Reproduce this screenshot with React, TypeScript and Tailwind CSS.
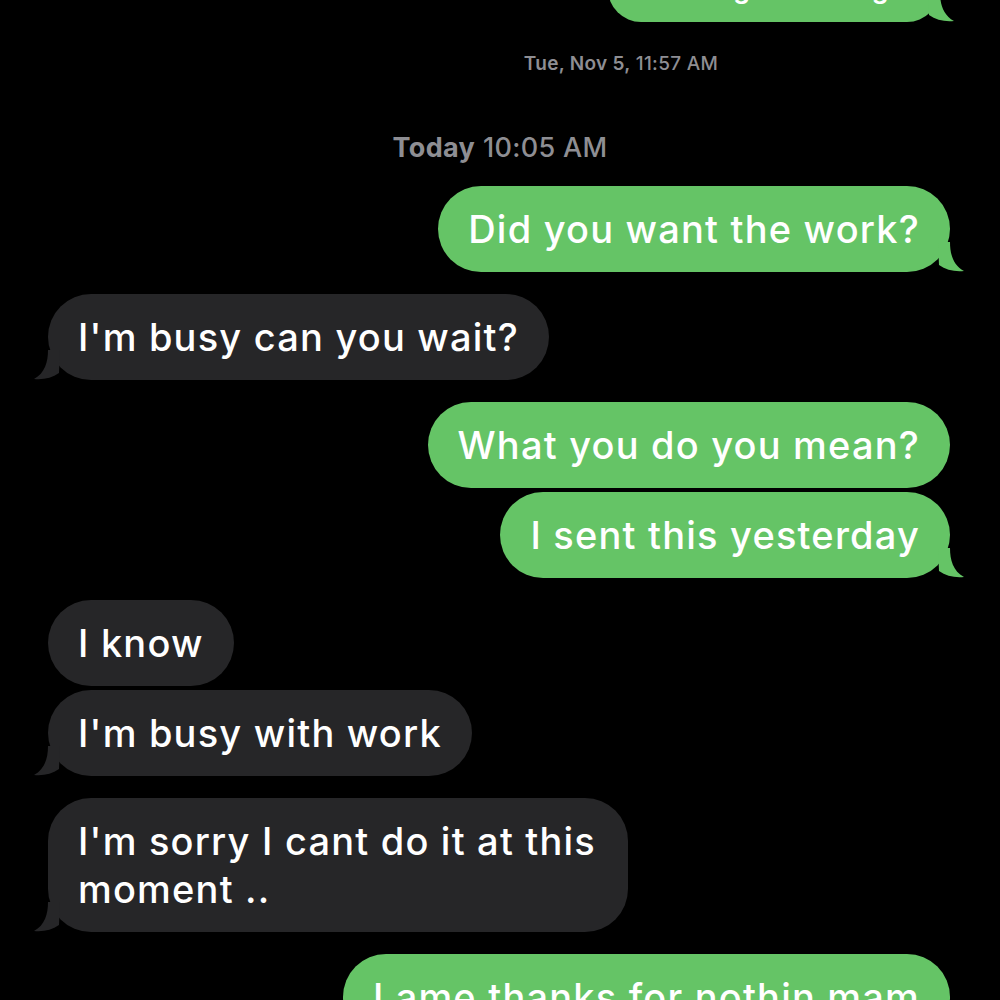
import React from 'react';

type Msg = { text: React.ReactNode; me: boolean; tail?: boolean };

const Tail = ({ me }: { me: boolean }) => (
  <svg
    className={me ? 'absolute bottom-0 right-[-14px] h-[30px] w-[26px]' : 'absolute bottom-0 left-[-14px] h-[30px] w-[26px] -scale-x-100'}
    viewBox="0 0 26 30"
  >
    <path
      d="M0 0 H12 C12 12 15 23 26 29 C17 30 8 28 1 23 Z"
      fill={me ? '#65c466' : '#262628'}
    />
  </svg>
);

const Bubble = ({ text, me, tail }: Msg) => (
  <div className={me ? 'flex justify-end pr-[50px]' : 'flex justify-start pl-[48px]'}>
    <div
      className={
        'relative rounded-[43px] px-[30px] py-[19px] text-[38px] font-medium leading-[48px] tracking-[1.2px] text-white ' +
        (me ? 'bg-[#65c466]' : 'bg-[#262628] max-w-[580px]')
      }
    >
      <span className="relative z-10">{text}</span>
      {tail && <Tail me={me} />}
    </div>
  </div>
);

const Group = ({ items }: { items: Msg[] }) => (
  <div className="flex flex-col gap-[4px]">
    {items.map((m, i) => (
      <Bubble key={i} {...m} />
    ))}
  </div>
);

export default function App() {
  return (
    <div
      className="h-[1000px] w-[1000px] overflow-hidden bg-black"
      style={{ fontFamily: 'Inter, "Noto Sans", sans-serif' }}
    >
      {/* earlier message, cut by the top edge */}
      <div className="mt-[-44px] flex justify-end pr-[60px]">
        <div className="relative rounded-[33px] px-[24px] py-[14px] text-[27px] font-semibold leading-[38px] tracking-[0.4px] text-white bg-[#65c466]">
          <span className="relative z-10">Cleaning and all right</span>
          <Tail me />
        </div>
      </div>

      <div className="mt-[28px] flex justify-center pl-[242px] text-[19px] font-semibold tracking-[0.3px] text-[#8e8e93]">
        Tue, Nov 5, <span className="ml-[5px] font-medium">11:57 AM</span>
      </div>

      <div className="mt-[49px] flex justify-center text-[27px] tracking-[0.3px] text-[#8e8e93]">
        <span className="font-bold">Today</span>
        <span className="ml-[8px] font-medium">10:05 AM</span>
      </div>

      <div className="mt-[18px] flex flex-col gap-[22px]">
        <Group items={[{ text: 'Did you want the work?', me: true, tail: true }]} />
        <Group items={[{ text: "I'm busy can you wait?", me: false, tail: true }]} />
        <Group
          items={[
            { text: 'What you do you mean?', me: true },
            { text: 'I sent this yesterday', me: true, tail: true },
          ]}
        />
        <Group
          items={[
            { text: 'I know', me: false },
            { text: "I'm busy with work", me: false, tail: true },
          ]}
        />
        <Group items={[{ text: "I'm sorry I cant do it at this moment ..", me: false, tail: true }]} />
        <Group items={[{ text: 'Lame thanks for nothin mam', me: true, tail: true }]} />
      </div>
    </div>
  );
}
